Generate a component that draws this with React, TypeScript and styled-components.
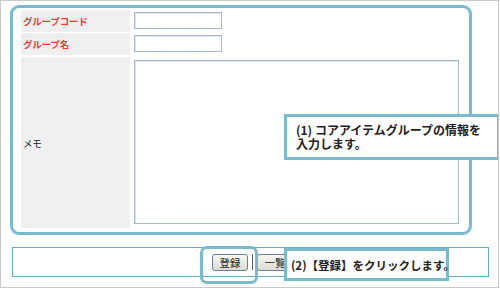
import styled, { createGlobalStyle } from "styled-components";

const GlobalStyle = createGlobalStyle`
    html, body {
        margin: 0;
        padding: 0;
        background: #ffffff;
    }
    body {
        font-family: "Noto Sans CJK JP", "DejaVu Sans", sans-serif;
    }
`;

const teal = "#78bbcf";

const formRows = [
    { label: "グループコード", required: true, kind: "input" },
    { label: "グループ名", required: true, kind: "input" },
    { label: "メモ", required: false, kind: "memo" },
];

export const App = () => {
    return (
        <>
            <GlobalStyle />
            <Frame>
                <Panel>
                    <FormGrid>
                        {formRows.map((row, index) => (
                            <Row key={index} tall={row.kind === "memo"}>
                                <LabelCell required={row.required}>{row.label}</LabelCell>
                                <ValueCell>
                                    {row.kind === "memo" ? <Memo /> : <TextInput />}
                                </ValueCell>
                            </Row>
                        ))}
                    </FormGrid>
                </Panel>

                <ButtonBar>
                    <ButtonSlot>
                        <Ring />
                        <Button>登録</Button>
                    </ButtonSlot>
                    <Separator />
                    <Button>一覧</Button>
                </ButtonBar>

                <Callout top={113} left={283} width={216} height={46} padTop={4} padLeft={9} size={12}>
                    <CalloutLine>(1) コアアイテムグループの情報を</CalloutLine>
                    <CalloutLine>入力します。</CalloutLine>
                </Callout>
                <Callout top={247} left={283} width={165} height={33} padTop={5} padLeft={4} size={11.5}>
                    <CalloutLine>(2)【登録】をクリックします。</CalloutLine>
                </Callout>
            </Frame>
        </>
    );
};

const Frame = styled.div`
    position: relative;
    box-sizing: border-box;
    width: 499px;
    height: 288px;
    border: 1px solid #c9c9c9;
    background: #ffffff;
    overflow: hidden;
`;

const Panel = styled.div`
    box-sizing: border-box;
    width: 462px;
    height: 230px;
    margin: 4px 0 0 9px;
    padding: 2px 0 0 8px;
    border: 3px solid ${teal};
    border-radius: 9px;
`;

const FormGrid = styled.div`
    display: flex;
    flex-direction: column;
    gap: 1px;
`;

const Row = styled.div<{ tall: boolean }>`
    display: grid;
    grid-template-columns: 109px 1fr;
    height: ${(p) => (p.tall ? "171px" : "22px")};
    margin-top: ${(p) => (p.tall ? "1px" : "0")};
`;

const LabelCell = styled.div<{ required: boolean }>`
    display: flex;
    align-items: center;
    padding-left: 2px;
    background: #efefef;
    font-size: 9.5px;
    font-weight: ${(p) => (p.required ? 700 : 400)};
    color: ${(p) => (p.required ? "#e83a36" : "#222222")};
    letter-spacing: -0.2px;
`;

const ValueCell = styled.div`
    padding: 2px 0 0 4px;
`;

const TextInput = styled.div`
    box-sizing: border-box;
    width: 88px;
    height: 17px;
    border: 1px solid #a6b8ce;
    box-shadow: inset 1px 1px 0 #dbe3ec;
    background: #ffffff;
`;

const Memo = styled.div`
    box-sizing: border-box;
    width: 325px;
    height: 164px;
    margin-top: 1px;
    border: 1px solid #a6b8ce;
    box-shadow: inset 1px 1px 0 #dbe3ec;
    background: #ffffff;
`;

const ButtonBar = styled.div`
    box-sizing: border-box;
    display: flex;
    align-items: center;
    gap: 4px;
    width: 477px;
    height: 30px;
    margin: 12px 0 0 11px;
    padding-left: 199px;
    border: 1px solid #63aec6;
`;

const ButtonSlot = styled.div`
    position: relative;
    display: flex;
`;

const Ring = styled.div`
    position: absolute;
    left: -12px;
    top: -8px;
    right: -10px;
    bottom: -13px;
    border: 3px solid ${teal};
    border-radius: 7px;
`;

const Button = styled.div`
    box-sizing: border-box;
    min-width: 36px;
    height: 17px;
    padding: 0 6px;
    display: flex;
    align-items: center;
    justify-content: center;
    border: 1px solid #6d7d99;
    border-radius: 3px;
    background: linear-gradient(#f7f7f3, #dcdcd2);
    font-size: 10.5px;
    color: #222222;
    white-space: nowrap;
`;

const Separator = styled.div`
    width: 1px;
    height: 16px;
    background: #555555;
`;

const Callout = styled.div<{
    top: number;
    left: number;
    width: number;
    height: number;
    padTop: number;
    padLeft: number;
    size: number;
}>`
    position: absolute;
    box-sizing: border-box;
    top: ${(p) => p.top}px;
    left: ${(p) => p.left}px;
    width: ${(p) => p.width}px;
    height: ${(p) => p.height}px;
    padding: ${(p) => p.padTop}px 0 0 ${(p) => p.padLeft}px;
    border: 3px solid ${teal};
    background: #ffffff;
    font-size: ${(p) => p.size}px;
    font-weight: 700;
    color: #222222;
    white-space: nowrap;
`;

const CalloutLine = styled.div`
    height: 14px;
    line-height: 18px;
`;

export default App;
